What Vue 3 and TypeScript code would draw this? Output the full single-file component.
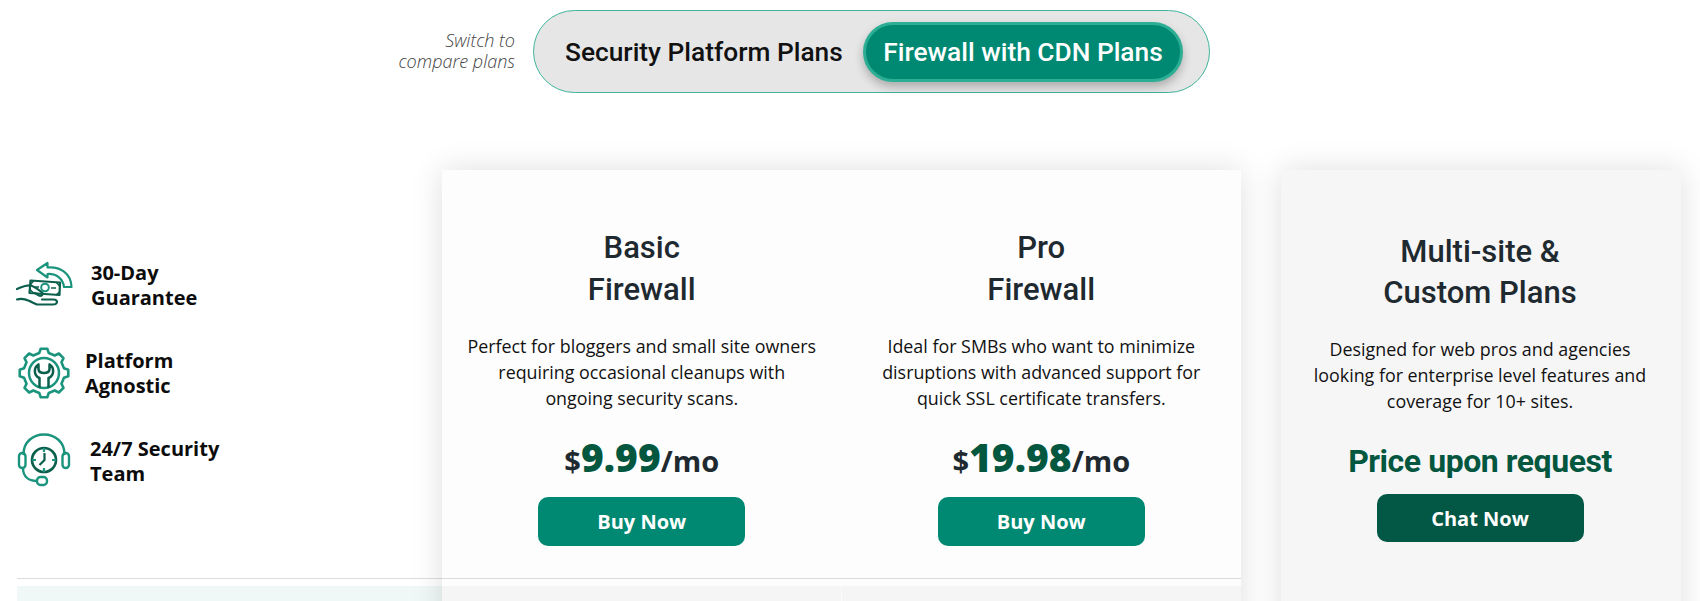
<script setup lang="ts">
interface Plan {
  title: string[];
  desc: string[];
  price: string;
}

const plans: Plan[] = [
  {
    title: ['Basic', 'Firewall'],
    desc: ['Perfect for bloggers and small site owners', 'requiring occasional cleanups with', 'ongoing security scans.'],
    price: '9.99',
  },
  {
    title: ['Pro', 'Firewall'],
    desc: ['Ideal for SMBs who want to minimize', 'disruptions with advanced support for', 'quick SSL certificate transfers.'],
    price: '19.98',
  },
];

const customDesc = ['Designed for web pros and agencies', 'looking for enterprise level features and', 'coverage for 10+ sites.'];

function gearPath(cx: number, cy: number, rOut: number, rIn: number, teeth: number): string {
  const pts: string[] = [];
  const step = (Math.PI * 2) / teeth;
  for (let i = 0; i < teeth; i++) {
    const a = i * step - Math.PI / 2;
    const spots: [number, number][] = [
      [rIn, a - step * 0.3],
      [rOut, a - step * 0.17],
      [rOut, a + step * 0.17],
      [rIn, a + step * 0.3],
    ];
    for (const [r, t] of spots) {
      pts.push(`${(cx + r * Math.cos(t)).toFixed(2)} ${(cy + r * Math.sin(t)).toFixed(2)}`);
    }
  }
  return 'M' + pts.join('L') + 'Z';
}
const gear = gearPath(35, 31, 24.5, 20.5, 8);
</script>

<template>
  <div class="page">
    <div class="switch-row">
      <p class="switch-label">Switch to<br />compare plans</p>
      <div class="switch">
        <span class="switch-item">Security Platform Plans</span>
        <span class="switch-item active">Firewall with CDN Plans</span>
      </div>
    </div>

    <div class="plans">
      <div class="left">
        <div class="features">
          <div class="feature f1">
            <svg class="ficon" viewBox="0 -2 70 60" width="70" height="60" fill="none">
              <path d="M27 13 37.500 6v4.500C50 9.500 61 16 61.500 30h-7.500C53 22 47 16.500 37.500 17v3.500Z" stroke="#1b947d" stroke-width="2.200" stroke-linejoin="round" />
              <path d="M20.500 23.500 50 25.500 49.500 38 19.500 36Z" stroke="#0b5f4c" stroke-width="2.200" stroke-linejoin="round" />
              <circle cx="35" cy="30.500" r="3.800" stroke="#1b947d" stroke-width="2" />
              <path d="M24 30h5M41 31h5M20.500 27.500l3-3.500M46.500 25.500l3 3.500M20 32.500l3.500 3.500M46 38l3.500-3" stroke="#0b5f4c" stroke-width="1.500" />
              <path d="M7 32C12 30 16 27.500 21 28.500 25 30 29 33 32 35.500 34 37.500 31 39.500 29 38.500L25 36" stroke="#0b5f4c" stroke-width="2.200" stroke-linecap="round" stroke-linejoin="round" />
              <path d="M7 42.500C14 40.500 19 44 27 47.500H43C48 47.500 48.500 42.500 43.500 42.500H32" stroke="#0b5f4c" stroke-width="2.200" stroke-linecap="round" stroke-linejoin="round" />
            </svg>
            <span class="ftext">30-Day<br />Guarantee</span>
          </div>
          <div class="feature f2">
            <svg class="ficon" viewBox="1 1 70 60" width="70" height="60" fill="none">
              <path :d="gear" stroke="#1b947d" stroke-width="2.600" stroke-linejoin="round" />
              <circle cx="35" cy="31" r="15" stroke="#1b947d" stroke-width="2.500" />
              <path d="M29.500 22.500C24.500 25.500 24.500 33.500 30.500 36V45M40.500 22.500C45.500 25.500 45.500 33.500 39.500 36V45M29.500 22.500V27.500Q30 31 35 31 40 31 40.500 27.500V22.500" stroke="#0b5f4c" stroke-width="2.500" stroke-linecap="round" stroke-linejoin="round" />
            </svg>
            <span class="ftext">Platform<br />Agnostic</span>
          </div>
          <div class="feature f3">
            <svg class="ficon" viewBox="1 2 70 60" width="70" height="60" fill="none">
              <path d="M14.500 25C14.500 13 24 5.500 35 5.500S55.500 13 55.500 25" stroke="#1b947d" stroke-width="2.500" stroke-linecap="round" />
              <rect x="10" y="24" width="6.500" height="15" rx="3.200" stroke="#1b947d" stroke-width="2.400" />
              <rect x="53.500" y="24" width="6.500" height="15" rx="3.200" stroke="#1b947d" stroke-width="2.400" />
              <path d="M14 39C14 48 20 52 28 52" stroke="#1b947d" stroke-width="2.400" />
              <rect x="28" y="48" width="10" height="8" rx="3.500" stroke="#1b947d" stroke-width="2.400" />
              <circle cx="35" cy="31" r="12" stroke="#0b5f4c" stroke-width="2.600" />
              <path d="M35 19v4M35 39v4M23 31h4M43 31h4" stroke="#1b947d" stroke-width="2.200" />
              <path d="M35.500 24V31L30.500 36" stroke="#0b5f4c" stroke-width="2.200" />
            </svg>
            <span class="ftext">24/7 Security<br />Team</span>
          </div>
        </div>
        <div class="rule"></div>
        <div class="tint"></div>
      </div>

      <div class="card main-card">
        <div class="columns">
          <section v-for="plan in plans" :key="plan.price" class="plan">
            <h2 class="title">
              <template v-for="line in plan.title" :key="line">{{ line }}<br /></template>
            </h2>
            <p class="desc">
              <template v-for="line in plan.desc" :key="line">{{ line }}<br /></template>
            </p>
            <p class="price">$<b>{{ plan.price }}</b>/mo</p>
            <button class="btn buy" type="button">Buy Now</button>
          </section>
        </div>
        <div class="rule"></div>
        <div class="strip">
          <div></div>
          <div></div>
        </div>
      </div>

      <div class="card side-card">
        <h2 class="title">Multi-site &amp;<br />Custom Plans</h2>
        <p class="desc">
          <template v-for="line in customDesc" :key="line">{{ line }}<br /></template>
        </p>
        <p class="request">Price upon request</p>
        <button class="btn chat" type="button">Chat Now</button>
      </div>
    </div>
  </div>
</template>

<style>
html,
body {
  margin: 0;
  background: #fff;
  overflow: hidden;
}
</style>

<style scoped>
.page {
  width: 1700px;
  height: 601px;
  overflow: hidden;
  background: #fff;
  font-family: "Open Sans", sans-serif;
  color: #111;
}
.switch-row {
  display: flex;
  align-items: center;
  padding-left: 380px;
  padding-top: 10px;
  gap: 18px;
}
.switch-label {
  margin: 0 0 2px;
  width: 135px;
  text-align: right;
  font-size: 18px;
  line-height: 21px;
  font-style: italic;
  font-weight: 300;
  color: #444;
}
.switch {
  display: flex;
  align-items: center;
  width: 677px;
  height: 83px;
  box-sizing: border-box;
  border: 1px solid #3fb59b;
  border-radius: 41.500px;
  background: #e6e6e6;
  padding-left: 31px;
  gap: 21px;
}
.switch-item {
  font-family: Roboto, sans-serif;
  font-size: 26.300px;
  font-weight: 500;
  white-space: nowrap;
  width: 277px;
  text-align: center;
  color: #111;
}
.switch-item.active {
  width: 320px;
  height: 60px;
  line-height: 55px;
  box-sizing: border-box;
  border: 3px solid #2cae95;
  border-radius: 30px;
  background: #008972;
  color: #fff;
  box-shadow: 0 5px 10px rgba(0, 0, 0, 0.25);
}
.plans {
  display: flex;
  margin-top: 77px;
  align-items: flex-start;
}
.left {
  width: 442px;
  flex: none;
  padding-left: 17px;
  box-sizing: border-box;
}
.features {
  height: 408px;
  padding-top: 85px;
  box-sizing: border-box;
  display: flex;
  flex-direction: column;
}
.feature {
  display: flex;
  align-items: center;
  height: 60px;
  margin-left: -7px;
}
.f1 { gap: 11px; }
.f2 { gap: 5px; margin-top: 28px; }
.f3 { gap: 10px; margin-top: 28px; }
.ficon {
  flex: none;
}
.ftext {
  font-size: 20px;
  line-height: 25px;
  font-weight: 700;
  color: #0c0c0c;
}
.rule {
  height: 1px;
  background: #dcdcdc;
}
.tint {
  height: 40px;
  margin-top: 7px;
  background: #eff8f6;
}
.card {
  flex: none;
  box-shadow: 0 0 30px rgba(0, 0, 0, 0.13);
}
.main-card {
  width: 799px;
  background: #fdfdfd;
  height: 470px;
}
.columns {
  display: flex;
  height: 408px;
}
.plan {
  width: 50%;
  text-align: center;
  padding-top: 57px;
  box-sizing: border-box;
}
.title {
  margin: 0;
  font-family: Roboto, sans-serif;
  font-size: 31px;
  line-height: 42px;
  font-weight: 500;
  color: #1f2a30;
}
.desc {
  margin: 22px 0 0;
  font-size: 17.850px;
  line-height: 26px;
  color: #111;
  white-space: nowrap;
}
.price {
  margin: 20px 0 0;
  font-size: 29px;
  line-height: 52px;
  font-weight: 700;
  color: #1f2a30;
}
.price b {
  font-size: 39px;
  color: #04573f;
}
.btn {
  display: block;
  margin: 10px auto 0;
  width: 207px;
  height: 49px;
  border: 0;
  border-radius: 10px;
  color: #fff;
  font-family: inherit;
  font-size: 20px;
  font-weight: 700;
}
.buy {
  background: #008972;
}
.strip {
  margin-top: 7px;
  display: flex;
  height: 55px;
  background: #f5f5f5;
}
.strip > div {
  flex: 1;
}
.strip > div + div {
  border-left: 1px solid #fbfbfb;
}
.side-card {
  margin-left: 40px;
  width: 400px;
  height: 470px;
  background: #f6f6f7;
  text-align: center;
  padding: 61px 2px 0 0;
  box-sizing: border-box;
}
.side-card .title {
  line-height: 41px;
}
.side-card .desc {
  margin-top: 23px;
}
.request {
  margin: 21px 0 0;
  font-family: Roboto, sans-serif;
  font-size: 32px;
  letter-spacing: -0.450px;
  line-height: 52px;
  font-weight: 700;
  color: #04573f;
}
.chat {
  margin-top: 7px;
  height: 48px;
  background: #025745;
}
</style>
